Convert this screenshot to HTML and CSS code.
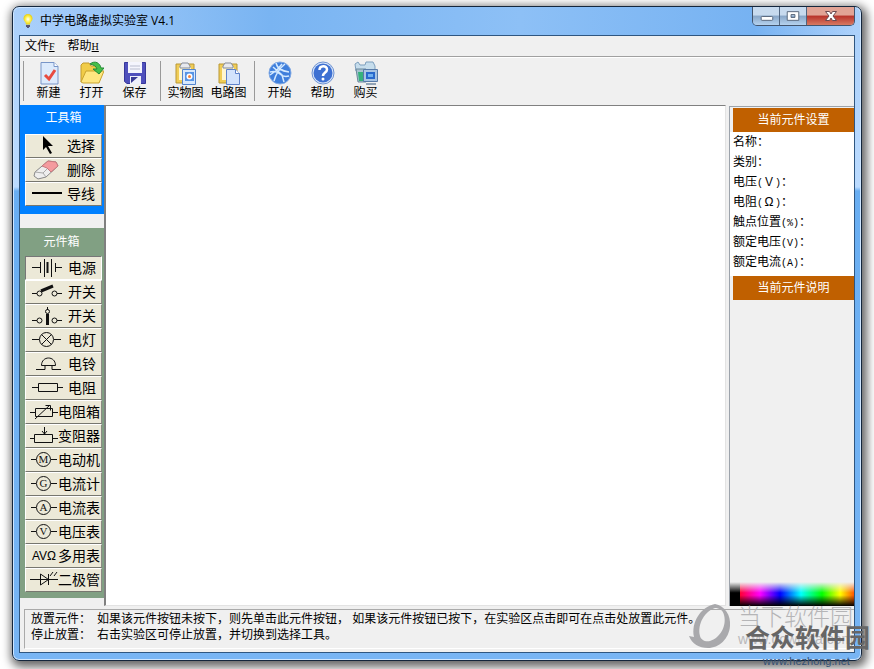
FILE: index.html
```html
<!DOCTYPE html>
<html lang="zh-CN">
<head>
<meta charset="utf-8">
<title>中学电路虚拟实验室 V4.1</title>
<link rel="stylesheet" href="styles.css">
</head>
<body>
<div class="window">
  <header class="titlebar">
    <svg class="app-icon" viewBox="0 0 16 16"><defs><radialGradient id="bulb"><stop offset="0" stop-color="#fff"/><stop offset=".5" stop-color="#fff35c"/><stop offset="1" stop-color="#e8cf10"/></radialGradient></defs><path d="M8 1a4.500 4.500 0 0 0-4.500 4.500C3.500 8 6 9 6 11.500h4C10 9 12.500 8 12.500 5.500A4.500 4.500 0 0 0 8 1z" fill="url(#bulb)"/><path d="M6 12h4v2H9v1H7v-1H6z" fill="#557"/></svg>
    <h1>中学电路虚拟实验室 V4.1</h1>
    <div class="captions">
      <button class="cap" aria-label="最小化"><svg viewBox="0 0 27 18"><rect x="8.500" y="9.500" width="12" height="4" rx="1" fill="#fff" stroke="#56657a"/></svg></button>
      <button class="cap" aria-label="最大化"><svg viewBox="0 0 27 18"><path d="M7.500 4.500h12v9h-12z M11.500 7.500h4v3h-4z" fill="#fff" fill-rule="evenodd" stroke="#56657a"/></svg></button>
      <button class="cap close" aria-label="关闭"><svg viewBox="0 0 47 18"><path d="M18.500 4.500h4l1.500 2.500 1.500-2.500h4l-3.500 4.500 3.500 4.500h-4l-1.500-2.500-1.500 2.500h-4l3.500-4.500z" fill="#fff" stroke="#6b4a50"/></svg></button>
    </div>
  </header>
  <div class="client">
    <nav class="menu"><button>文件<u>F</u></button><button>帮助<u>H</u></button></nav>
    <div class="toolbar">
      <div class="group">
        <button><svg viewBox="0 0 24 24"><path d="M4 1.500h13l4 4V23H4z" fill="#dceafc" stroke="#7895c8"/><path d="M17 1.500v4h4" fill="#fff" stroke="#7895c8"/><path d="M8 14l4 4 6-9" fill="none" stroke="#e84b40" stroke-width="3"/></svg>新建</button>
        <button><svg viewBox="0 0 24 24"><path d="M1 21V4l2-2h6l2 3h8v5" fill="#f1cc48" stroke="#c29b2d"/><path d="M1 21l5-11h18l-5 12H3z" fill="#ffe680" stroke="#c9a32f"/><path d="M10 3c5-4 10-1 11 4h3l-5 6-6-5h4c-1-3-3-4-7-5z" fill="#45bf49" stroke="#238b35"/></svg>打开</button>
        <button><svg viewBox="0 0 24 24"><path d="M1.500 1.500h21v21H4l-2.500-2z" fill="#4f50bc" stroke="#37379b"/><path d="M5 1h14v11H5z" fill="#f4f5fd"/><path d="M7 5h10M7 8h10" stroke="#b9bdcf"/><path d="M7 15h11v8H7z" fill="#eef0fa"/><path d="M8 22v-6h7z" fill="#3a3b96"/></svg>保存</button>
      </div>
      <div class="group">
        <button><svg viewBox="0 0 24 24"><path d="M2 3h18v19H2z" fill="#f0cd57" stroke="#b99836"/><path d="M5 6h12v13H5z" fill="#fff6cf"/><path d="M6 5l2-3h6l2 3v2H6z" fill="#e7e9ee" stroke="#858b99"/><path d="M8.500 8.500h13v15h-13z" fill="#d8e8fc" stroke="#5384ce"/><path d="M11 11h9v9h-9z" fill="#5794e5"/><circle cx="15.500" cy="15.500" r="3" fill="#fff"/><circle cx="15.500" cy="15.500" r="1.500" fill="#f5803a"/></svg>实物图</button>
        <button><svg viewBox="0 0 24 24"><path d="M2 3h18v19H2z" fill="#f0cd57" stroke="#b99836"/><path d="M5 6h12v13H5z" fill="#fff6cf"/><path d="M6 5l2-3h6l2 3v2H6z" fill="#e7e9ee" stroke="#858b99"/><path d="M9.500 8.500h9l4 4v11h-13z" fill="#d3e3fc" stroke="#5f83cb"/><path d="M18.500 8.500v4h4" fill="#fff" stroke="#5f83cb"/></svg>电路图</button>
      </div>
      <div class="group">
        <button><svg viewBox="0 0 24 24"><circle cx="12" cy="12" r="11" fill="#3f7fdc" stroke="#7fa8e4"/><path d="M2 11c5-1 8 0 10 2s5 3 9 2M8 2c1 5 5 8 13 9M17 3c-5 4-9 9-11 17M5 6l9 8 2 7M2 14l7-5 5-6" fill="none" stroke="#d4eaff" stroke-width="1.500"/></svg>开始</button>
        <button><svg viewBox="0 0 24 24"><circle cx="12" cy="12" r="11" fill="#dce8fa" stroke="#6c91d2"/><circle cx="12" cy="12" r="9.500" fill="#3d70d2"/><path d="M8.500 9c0-5 7.500-5 7.500-.5 0 3-4 3-4 6.500" fill="none" stroke="#fff" stroke-width="2.500"/><circle cx="12" cy="18" r="1.500" fill="#fff"/></svg>帮助</button>
        <button><svg viewBox="0 0 24 24"><path d="M1 3l3-2 2 3h5l1-3h7l2 4v5H2z" fill="#c6ddec" stroke="#7d9fbd"/><path d="M2 8h10v13H4z" fill="#a5c3cf" stroke="#6c879c"/><path d="M4 11h5v9H5z" fill="#35b27c"/><path d="M9.500 8.500h14v12h-14z" fill="#a9c5e3" stroke="#587ba8"/><path d="M12 11h9v7h-9z" fill="#2869cc"/><path d="M14 13h5v3h-5z" fill="#6fb0f0"/><path d="M12 23h10" stroke="#91a3b5" stroke-width="2"/></svg>购买</button>
      </div>
    </div>
    <main class="workspace">
      <aside class="palette">
        <section class="box tools">
          <h2>工具箱</h2>
          <button><svg viewBox="0 0 34 22"><path d="M15 1v14l3-3 4 7 2-1-4-7h5z" fill="#000"/></svg>选择</button>
          <button><svg viewBox="0 0 34 22"><path d="M7 13L20 2l8 1 2 4-12 11-8 2-4-3z" fill="#eee" stroke="#888"/><path d="M14 7l6-5 8 1 2 4-7 6-4-4z" fill="#f49b9e" stroke="#c8797d"/><path d="M7 13l8 1 3 4M15 14l4-4" fill="none" stroke="#aaa"/></svg>删除</button>
          <button><svg viewBox="0 0 34 22"><path d="M4 10h30" stroke="#000" stroke-width="2"/></svg>导线</button>
        </section>
        <section class="box parts">
          <h2>元件箱</h2>
          <button class="pressed"><svg viewBox="0 0 34 22"><path d="M3 10.500h9M11.500 5v11M15.500 2v18M18.500 5v11M22.500 2v18M26.500 6v9M27 10.500h6"/><path d="M18.500 5v11" stroke-width="2"/></svg>电源</button>
          <button><svg viewBox="0 0 34 22"><path d="M3 12.500h5M28 12.500h5"/><circle cx="10.500" cy="12.500" r="2.500"/><circle cx="25.500" cy="12.500" r="2.500"/><path d="M12 10l12-5" stroke-width="3"/></svg>开关</button>
          <button><svg viewBox="0 0 34 22"><path d="M3 15.500h5M28 15.500h5M18.500 2v3"/><circle cx="10.500" cy="15.500" r="2.500"/><circle cx="25.500" cy="15.500" r="2.500"/><circle cx="18.500" cy="6.500" r="2"/><path d="M18.500 9v11" stroke-width="3"/></svg>开关</button>
          <button><svg viewBox="0 0 34 22"><circle cx="17.500" cy="10.500" r="7"/><path d="M3 10.500h7M25 10.500h7M12.500 5.500l10 10M22.500 5.500l-10 10"/></svg>电灯</button>
          <button><svg viewBox="0 0 34 22"><path d="M12.500 12.500c0-10 14-10 14 0zM7 16.500h9v-4M23 12.500v4h9"/></svg>电铃</button>
          <button><svg viewBox="0 0 34 22"><path d="M3 10.500h6M29 10.500h5M9.500 6.500h19v8h-19z"/></svg>电阻</button>
          <button class="wide"><svg viewBox="0 0 28 22"><path d="M0 11.500h5M22 11.500h6M5.500 7.500h17v8h-17zM5 18L20 4M15.500 4.500h5v5"/></svg>电阻箱</button>
          <button class="wide"><svg viewBox="0 0 28 22"><path d="M0 13.500h4M23 13.500h5M4.500 9.500h18v8h-18zM14.500 2v7M12 6l2.500 3L17 6"/></svg>变阻器</button>
          <button class="wide"><svg viewBox="0 0 28 22"><circle cx="13.500" cy="10.500" r="7"/><path d="M1 10.500h5M21 10.500h6"/><text x="13.500" y="14">M</text></svg>电动机</button>
          <button class="wide"><svg viewBox="0 0 28 22"><circle cx="13.500" cy="10.500" r="7"/><path d="M1 10.500h5M21 10.500h6"/><text x="13.500" y="14">G</text></svg>电流计</button>
          <button class="wide"><svg viewBox="0 0 28 22"><circle cx="13.500" cy="10.500" r="7"/><path d="M1 10.500h5M21 10.500h6"/><text x="13.500" y="14">A</text></svg>电流表</button>
          <button class="wide"><svg viewBox="0 0 28 22"><circle cx="13.500" cy="10.500" r="7"/><path d="M1 10.500h5M21 10.500h6"/><text x="13.500" y="14">V</text></svg>电压表</button>
          <button class="wide"><span class="avo">AVΩ</span>多用表</button>
          <button class="wide"><svg viewBox="0 0 28 22"><path d="M0 10.500h28M10.500 5v11l8-5.500zM18.500 5v11M20 7l3-4M24 7l3-4"/></svg>二极管</button>
        </section>
      </aside>
      <div class="canvas"></div>
      <aside class="inspector">
        <h2>当前元件设置</h2>
        <ul>
          <li>名称：</li>
          <li>类别：</li>
          <li>电压<span>(</span>Ｖ<span>)</span>：</li>
          <li>电阻<span>(</span><b>Ω</b><span>)</span>：</li>
          <li>触点位置<span>(%)</span>：</li>
          <li>额定电压<span>(V)</span>：</li>
          <li>额定电流<span>(A)</span>：</li>
        </ul>
        <h2>当前元件说明</h2>
        <div class="spectrum"></div>
      </aside>
    </main>
    <footer class="status">
      <dl>
        <dt>放置元件：</dt><dd>如果该元件按钮未按下，则先单击此元件按钮， 如果该元件按钮已按下，在实验区点击即可在点击处放置此元件。</dd>
        <dt>停止放置：</dt><dd>右击实验区可停止放置，并切换到选择工具。</dd>
      </dl>
    </footer>
  </div>
</div>
<div class="watermark">
  <svg class="swirl" viewBox="0 0 44 46"><path fill-rule="evenodd" d="M27 1C37 3 43 12 42 23 41 36 31 45 20 45 11 45 4 41 1 33l5 1C3 20 12 4 27 1zM27 5C17 8 9 21 12 33c1 4 5 6 10 5C32 35 39 23 36 12c-1-5-5-7-9-7z" fill="#a9a9ac"/></svg>
  <span class="brand-a">当下软件园</span>
  <span class="url-a">www.downxia.com</span>
  <span class="brand-b">合众软件园</span>
  <span class="url-b">www.hezhong.net</span>
</div>
</body>
</html>
```
FILE: styles.css
```css
* { box-sizing: border-box; }
html { height: 100%; }
body {
  margin: 0;
  height: 100vh;
  padding: 6px 12px 8px;
  position: relative;
  overflow: hidden;
  background: #fff;
  color: #000;
  font: 12px/16px "Liberation Sans", "Noto Sans CJK SC", sans-serif;
}
h1, h2, ul, dl, dd { margin: 0; padding: 0; font-size: 12px; font-weight: normal; }
button { font: inherit; color: inherit; border: 0; padding: 0; background: none; }

.window {
  height: 100%;
  display: flex;
  flex-direction: column;
  padding: 0 6px 7px;
  border: 1px solid #14263c;
  border-radius: 7px;
  background: linear-gradient(#a9cffa 0, #bbdbff 180px, #69aef2 184px, #78b5f4 100%);
  box-shadow: inset 0 0 0 1px #cfe6ff, 2px 3px 10px 3px rgba(0, 0, 0, .6);
}
.titlebar {
  height: 28px;
  flex: none;
  display: flex;
  align-items: center;
  gap: 4px;
  padding-left: 1px;
  background: linear-gradient(90deg, transparent, #79b4f2 30%, #8dc0f6 60%, #76b2f2 88%, transparent);
}
.app-icon { width: 16px; height: 16px; }
h1 { flex: 1; font-family: "Open Sans", "Noto Sans CJK SC", sans-serif; }
.captions { display: flex; align-self: flex-start; border: 1px solid #42546d; border-top: 0; border-radius: 0 0 5px 5px; overflow: hidden; }
.cap { width: 27px; height: 18px; background: linear-gradient(#c7daee 45%, #88a6c7 50%, #b5d2ef); border-right: 1px solid #50657f; }
.cap svg { display: block; height: 18px; width: 100%; }
.close { width: 47px; border: 0; background: linear-gradient(#e1a395 45%, #b8322a 50%, #d77a62); }

.client { flex: 1; min-height: 0; display: flex; flex-direction: column; border: 1px solid #2f5680; background: #f0f0f0; }
.menu { height: 21px; flex: none; display: flex; gap: 13px; padding-left: 5px; border-bottom: 1px solid #a0a0a0; }
.menu u { font: 10px "Liberation Serif", serif; text-decoration: underline; }
.toolbar { height: 48px; flex: none; display: flex; padding: 3px 3px 2px; border-top: 1px solid #fff; }
.group { display: flex; height: 40px; border-left: 1px solid #999; padding: 0 4px 0 3px; }
.group button { width: 43px; display: flex; flex-direction: column; align-items: center; white-space: nowrap; }
.group svg { width: 24px; height: 24px; flex: none; }

.workspace { flex: 1; min-height: 0; display: flex; }
.palette { width: 84px; flex: none; display: flex; flex-direction: column; gap: 14px; }
.box { padding: 0 2px 6px 5px; }
.box h2 { color: #fff; text-align: center; line-height: 28px; padding-right: 4px; }
.tools { background: #0080ff; padding-bottom: 8px; }
.parts { background: #81a083; }
.tools h2 { line-height: 26px; padding: 0 0 3px; }
.box button {
  width: 100%;
  height: 24px;
  display: flex;
  align-items: center;
  justify-content: flex-end;
  gap: 5px;
  padding: 0 5px 0 3px;
  font-size: 14px;
  background: #ece9d8;
  border: 1px solid;
  border-color: #fff #8b8b83 #77776f #fff;
  white-space: nowrap;
}
.tools button { padding-right: 6px; }
.box svg { width: 34px; height: 22px; flex: none; }
.box .wide { padding: 0 1px 0 0; gap: 0; }
.box .wide svg { width: 28px; }
.parts svg { fill: none; stroke: #111; }
.parts text { fill: #111; stroke: none; font: 11px "Liberation Serif", serif; text-anchor: middle; }
.box .pressed { border-color: #777 #fff #fff #777; }
.avo { width: 28px; font-size: 12px; }

.canvas { flex: 1; background: #fff; border: 1px solid #e3e3e3; border-top-color: #808080; border-left: 2px solid #808080; margin-right: 3px; }
.inspector { width: 125px; flex: none; display: flex; flex-direction: column; margin-top: 1px; padding-top: 1px; border-top: 1px solid #9ca3ab; border-left: 1px solid #9ca3ab; }
.inspector h2 { margin-left: 3px; color: #fff; background: #c06000; line-height: 24px; text-align: center; }
.inspector ul { list-style: none; background: #fff; padding: 0 0 4px 3px; }
.inspector li { height: 20px; line-height: 20px; white-space: nowrap; }
.inspector li span { font: 10px "Liberation Mono", monospace; }
.inspector b { display: inline-block; width: 12px; text-align: center; font-weight: normal; }
.spectrum {
  height: 24px;
  margin-top: auto;
  background:
    linear-gradient(#f0f0f0, transparent 45%, transparent 55%, #000),
    linear-gradient(90deg, #000 10px, #f03 10px, #f0f 30px, #00f 50px, #0ff 71px, #0f0 92px, #ff0 110px, #f50 124px);
}
.status { height: 46px; flex: none; padding: 3px 0 3px 4px; }
.status dl { display: grid; grid-template-columns: 66px 1fr; height: 40px; padding: 1px 0 0 6px; align-content: start; border: 1px solid #aaa; border-bottom-color: #fff; border-right: 0; white-space: nowrap; }

.watermark { position: absolute; right: 0; bottom: 0; width: 186px; height: 66px; overflow: hidden; pointer-events: none; white-space: nowrap; }
.watermark > * { position: absolute; }
.swirl { left: 0; top: 0; width: 44px; height: 46px; }
.brand-a { left: 50px; top: 1px; font-size: 23px; line-height: 26px; font-weight: 300; color: #b5b5b7; }
.url-a { left: 50px; top: 28px; font-size: 14px; color: #b8b8ba; }
.brand-b { left: 57px; top: 20px; font-size: 25px; line-height: 30px; font-weight: bold; color: #666; }
.url-b { left: 75px; top: 50px; font-size: 11px; line-height: 16px; color: #345174; }
```
